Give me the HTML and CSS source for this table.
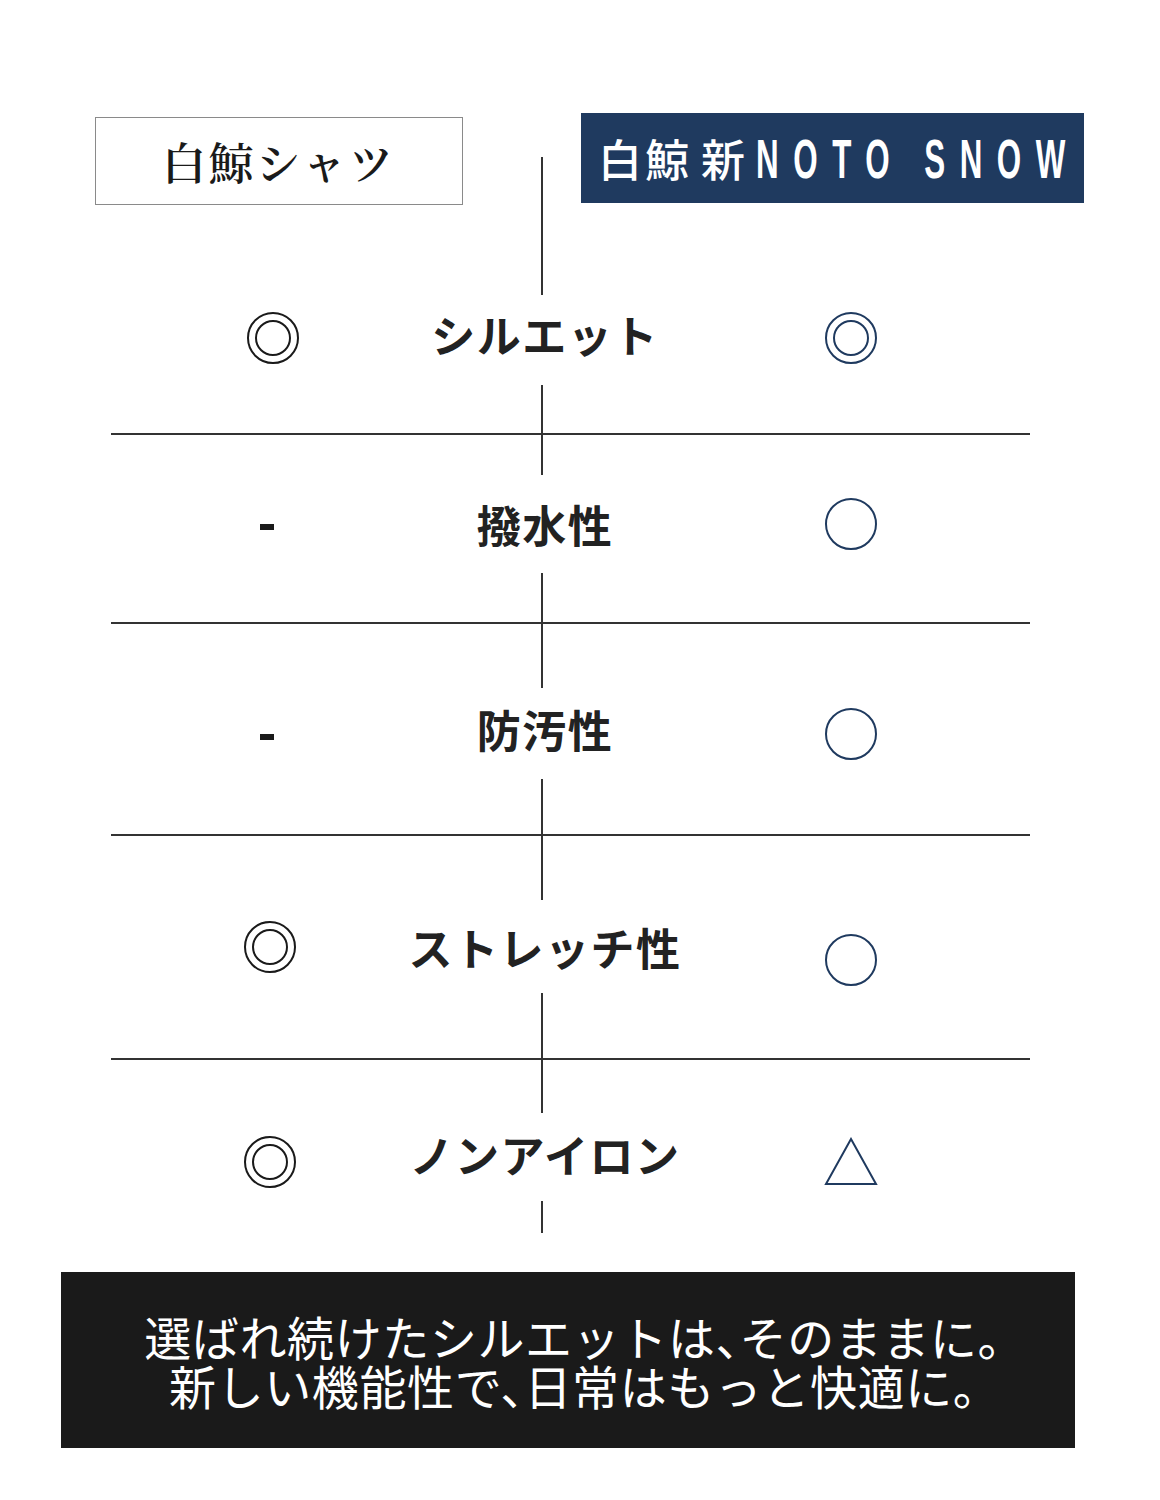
FILE: index.html
```html
<!DOCTYPE html>
<html lang="ja">

<head>
    <meta charset="UTF-8">
    <meta name="viewport" content="width=device-width, initial-scale=1.0">
    <title>白鯨シャツ 比較</title>
    <link rel="stylesheet" href="styles.css">
</head>

<body>
    <div class="page">
        <div class="compare-head">
            <div class="head-old">白鯨シャツ</div>
            <div class="head-gap"><span class="head-line"></span></div>
            <div class="head-new">白鯨<span class="head-sub">新</span><span class="latin">NOTO SNOW</span></div>
        </div>

        <div class="compare">
            <div class="row row-1">
                <span class="seg seg-top"></span>
                <div class="mark mark-old">
                    <svg width="54" height="54" viewBox="0 0 54 54"><circle cx="27" cy="27" r="25" /><circle cx="27" cy="27" r="17" /></svg>
                </div>
                <div class="label">シルエット</div>
                <div class="mark mark-new">
                    <svg width="54" height="54" viewBox="0 0 54 54"><circle cx="27" cy="27" r="25" /><circle cx="27" cy="27" r="17" /></svg>
                </div>
                <span class="seg seg-bottom"></span>
            </div>

            <div class="row row-2">
                <span class="seg seg-top"></span>
                <div class="mark mark-old"><span class="dash"></span></div>
                <div class="label">撥水性</div>
                <div class="mark mark-new">
                    <svg width="54" height="54" viewBox="0 0 54 54"><circle cx="27" cy="27" r="25" /></svg>
                </div>
                <span class="seg seg-bottom"></span>
            </div>

            <div class="row row-3">
                <span class="seg seg-top"></span>
                <div class="mark mark-old"><span class="dash"></span></div>
                <div class="label">防汚性</div>
                <div class="mark mark-new">
                    <svg width="54" height="54" viewBox="0 0 54 54"><circle cx="27" cy="27" r="25" /></svg>
                </div>
                <span class="seg seg-bottom"></span>
            </div>

            <div class="row row-4">
                <span class="seg seg-top"></span>
                <div class="mark mark-old">
                    <svg width="54" height="54" viewBox="0 0 54 54"><circle cx="27" cy="27" r="25" /><circle cx="27" cy="27" r="17" /></svg>
                </div>
                <div class="label">ストレッチ性</div>
                <div class="mark mark-new mark-lower">
                    <svg width="54" height="54" viewBox="0 0 54 54"><circle cx="27" cy="27" r="25" /></svg>
                </div>
                <span class="seg seg-bottom"></span>
            </div>

            <div class="row row-5">
                <span class="seg seg-top"></span>
                <div class="mark mark-old mark-low">
                    <svg width="54" height="54" viewBox="0 0 54 54"><circle cx="27" cy="27" r="25" /><circle cx="27" cy="27" r="17" /></svg>
                </div>
                <div class="label">ノンアイロン</div>
                <div class="mark mark-new mark-low">
                    <svg width="56" height="50" viewBox="0 0 56 50"><polygon points="28,2 53,47 3,47" /></svg>
                </div>
                <span class="seg seg-bottom"></span>
            </div>
        </div>

        <div class="summary">
            <p>選ばれ続けたシルエットは、そのままに。</p>
            <p>新しい機能性で、日常はもっと快適に。</p>
        </div>
    </div>
</body>

</html>
```

FILE: styles.css
```css
body {
    margin: 0;
    background-color: #ffffff;
    font-family: "Noto Sans CJK JP", "Noto Sans", sans-serif;
    color: #222222;
}

.page {
    width: 1160px;
    padding-top: 113px;
    padding-bottom: 52px;
}

/* header */

.compare-head {
    display: grid;
    grid-template-columns: 368px 118px 503px;
    align-items: start;
    margin-left: 95px;
}

.head-old {
    box-sizing: border-box;
    height: 88px;
    margin-top: 4px;
    border: 1px solid #8a8a8a;
    display: flex;
    justify-content: center;
    align-items: center;
    font-family: "Noto Serif CJK JP", "Noto Sans CJK JP", serif;
    font-size: 44px;
    font-weight: 600;
    letter-spacing: 3px;
    color: #1a1a1a;
}

.head-gap {
    height: 92px;
}

.head-line {
    display: block;
    width: 2px;
    height: 48px;
    margin: 44px 0 0 78px;
    background-color: #333333;
}

.head-new {
    height: 90px;
    background-color: #1f3a5f;
    color: #ffffff;
    display: flex;
    align-items: center;
    padding-left: 17px;
    font-size: 44px;
    font-weight: 500;
    letter-spacing: 3px;
    white-space: nowrap;
}

.head-sub {
    margin-left: 9px;
}

.head-new .latin {
    display: inline-block;
    margin-left: 8px;
    font-family: "Liberation Sans", sans-serif;
    font-weight: 700;
    font-size: 56px;
    letter-spacing: 26px;
    word-spacing: -6px;
    transform: scaleX(0.56);
    transform-origin: left center;
}

/* comparison table */

.compare {
    width: 919px;
    margin-left: 111px;
}

.row {
    display: grid;
    grid-template-columns: 318px 226px 375px;
}

.row + .row {
    border-top: 2px solid #333333;
}

.row-1 { grid-template-rows: 90px 90px 48px; }
.row-2 { grid-template-rows: 40px 98px 49px; }
.row-3 { grid-template-rows: 64px 91px 55px; }
.row-4 { grid-template-rows: 64px 93px 65px; }
.row-5 { grid-template-rows: 53px 88px 32px; }

.seg {
    grid-column: 2;
    justify-self: center;
    width: 2px;
    background-color: #333333;
}

.seg-top { grid-row: 1; }
.seg-bottom { grid-row: 3; }

.label {
    grid-column: 2;
    grid-row: 2;
    display: flex;
    justify-content: center;
    align-items: center;
    white-space: nowrap;
    font-size: 44px;
    font-weight: 700;
    letter-spacing: 1.5px;
    padding-left: 6px;
    color: #222222;
}

.row-1 .label { padding-bottom: 12px; }
.row-3 .label { padding-bottom: 9px; }
.row-5 .label { padding-bottom: 6px; }

.mark {
    grid-row: 2;
    display: flex;
    justify-content: center;
    align-items: center;
}

.mark-old {
    grid-column: 1;
}

.mark-new {
    grid-column: 3;
    padding-left: 16px;
}

.mark-low {
    padding-top: 10px;
}

.mark-lower {
    padding-top: 26px;
}

.row-1 .mark {
    padding-bottom: 4px;
}

.row-1 .mark-old {
    padding-left: 5px;
}

.mark svg circle,
.mark svg polygon {
    fill: none;
    stroke-width: 2;
}

.mark-old svg circle {
    stroke: #1a1a1a;
}

.mark-new svg circle,
.mark-new svg polygon {
    stroke: #1f3a5f;
}

.dash {
    display: block;
    width: 14px;
    height: 6px;
    background-color: #1a1a1a;
    margin: 6px 0 0 -6px;
}

/* summary */

.summary {
    box-sizing: border-box;
    width: 1014px;
    height: 176px;
    margin: 39px 0 0 61px;
    background-color: #1a1a1a;
    color: #ffffff;
    display: flex;
    flex-direction: column;
    justify-content: center;
    align-items: center;
    padding-left: 10px;
}

.summary p {
    margin: 0;
    font-size: 47px;
    line-height: 49px;
    font-weight: 400;
    letter-spacing: 0.6px;
    font-feature-settings: "halt";
    white-space: nowrap;
}
```
